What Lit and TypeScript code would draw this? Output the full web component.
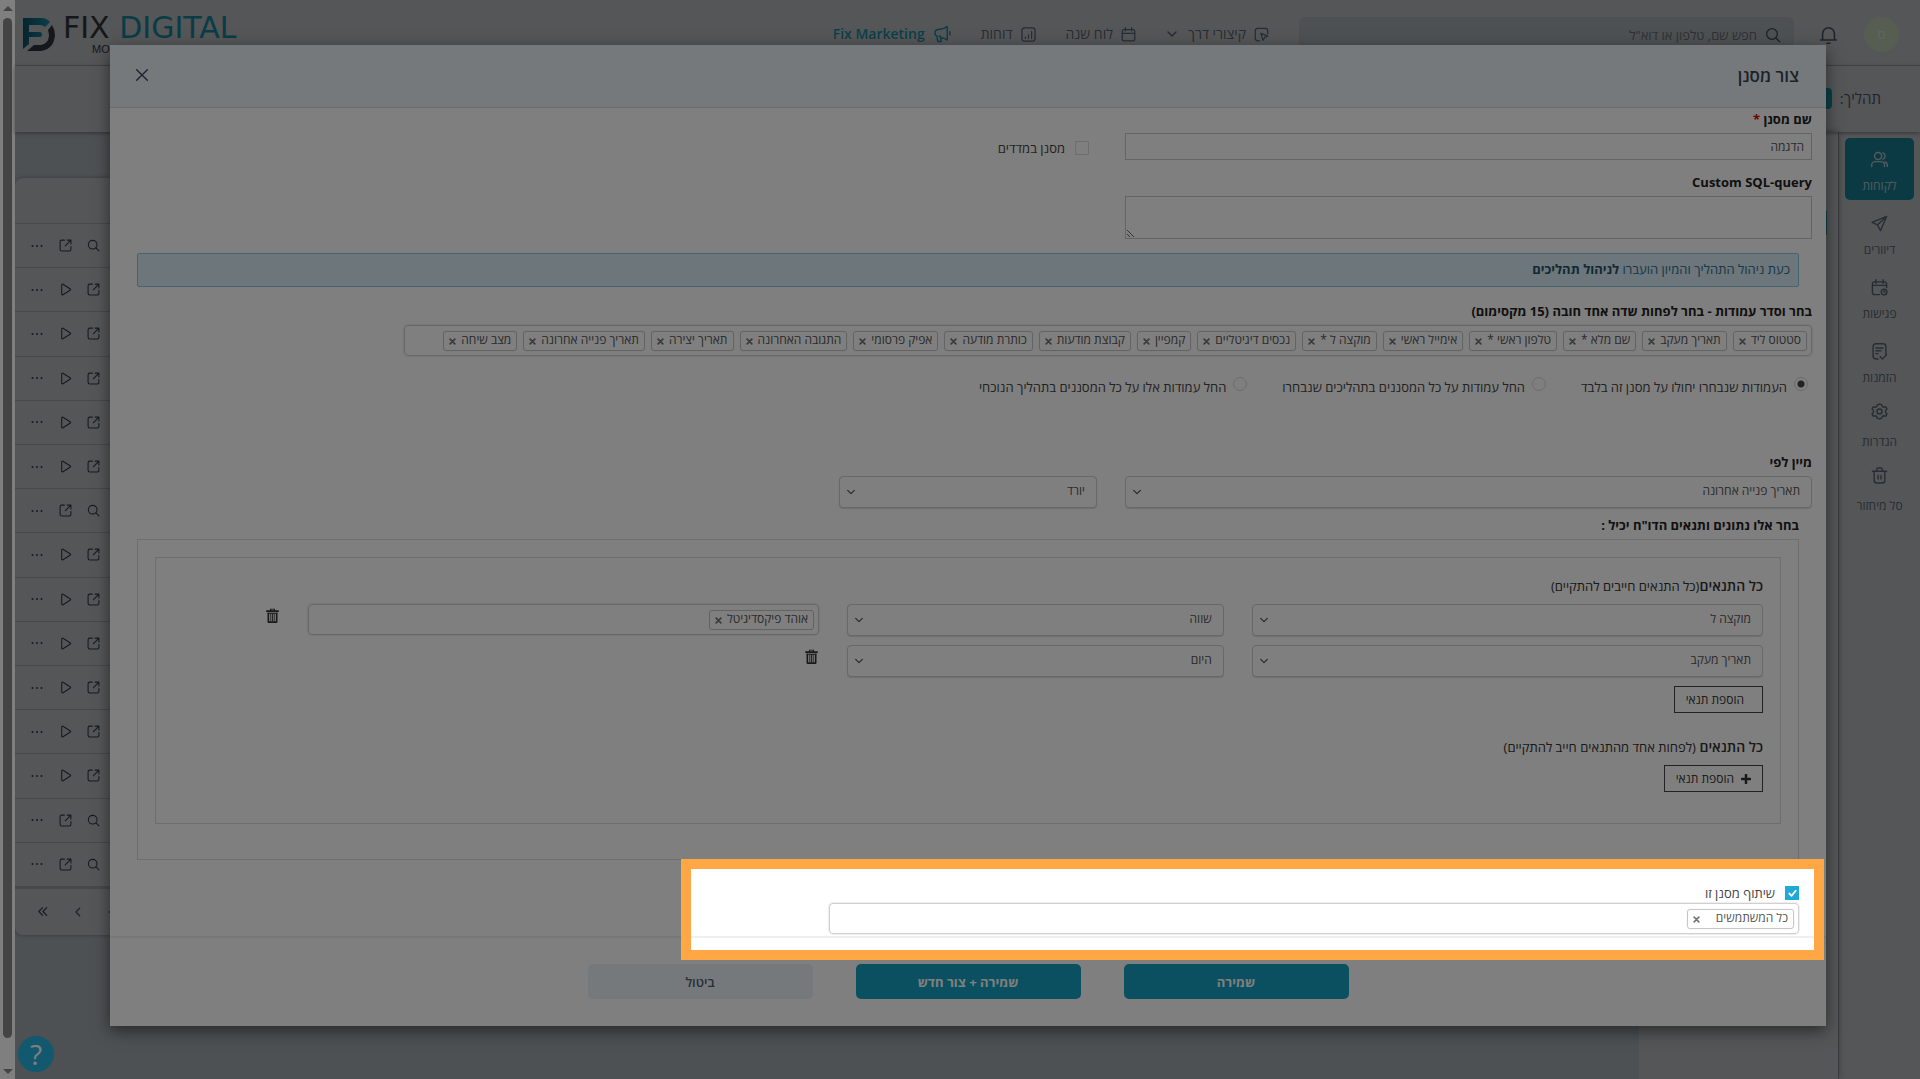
import { LitElement, html, svg, css, nothing } from "lit";
import { customElement, property } from "lit/decorators.js";
import { classMap } from "lit/directives/class-map.js";

const ICONS: Record<string, unknown> = {
  close: svg`<path d="M4 4l16 16M20 4L4 20"/>`,
  bell: svg`<path d="M2 19h20M4.500 19v-8a7.500 7.500 0 0 1 15 0v8M10 23h4"/>`,
  search: svg`<circle cx="10.500" cy="10.500" r="8"/><path d="M16.500 16.500L22 22"/>`,
  shortcut: svg`<path d="M9 22H6a4 4 0 0 1-4-4V6a4 4 0 0 1 4-4h12a4 4 0 0 1 4 4v5"/><path d="M11 10l11 4.500-5 2-2.500 5z"/>`,
  chevron: svg`<path d="M4 8l8 8 8-8"/>`,
  calendar: svg`<rect x="2" y="4" width="20" height="18" rx="3"/><path d="M2 10h20M7 1v5M17 1v5"/>`,
  report: svg`<rect x="1.500" y="1.500" width="21" height="21" rx="4"/><path d="M7 16v2M12 12v6M17 7v11"/>`,
  megaphone: svg`<path d="M19 2C15 5 11 6 6.500 6A4.500 4.500 0 0 0 5 14.500L6.500 22H11l-1-5c3 0 6 1 9 3zM22.500 9v4M8 15h2"/>`,
  users: svg`<circle cx="10" cy="7" r="5"/><path d="M1 22v-2a5 5 0 0 1 5-5h8a5 5 0 0 1 5 5v2M17 2.500a5 5 0 0 1 0 9M19.500 15.500a5 5 0 0 1 3.500 5V22"/>`,
  send: svg`<path d="M22 2L1.500 10.500l7.500 3.500L13.500 22zM22 2L9 14"/>`,
  meeting: svg`<path d="M12 22H5a3 3 0 0 1-3-3V7a3 3 0 0 1 3-3h14a3 3 0 0 1 3 3v5M2 9h20M7 1v5M17 1v5"/><circle cx="18.500" cy="18.500" r="4"/><path d="M18.500 16.500v2h1.500"/>`,
  orders: svg`<path d="M10 22.500H7a4 4 0 0 1-4-4V5a4 4 0 0 1 4-4h10a4 4 0 0 1 4 4v11M7 7h10M7 11h7M7 15h3M13 19.500l3 3 6-6"/>`,
  gear: svg`<circle cx="12" cy="12" r="3.500"/><path d="M12 1.500l3 1 1 2.500 2 1 3-.5 1.500 3-2 2v3l2 2-1.500 3-3-.5-2 1-1 2.500-3 1-3-1L8 19l-2-1-3 .5-1.500-3 2-2v-3l-2-2L3 5.500 6 6l2-1 1-2.500z"/>`,
  bin: svg`<path d="M2 6h20M8 6V3.500A2 2 0 0 1 10 1.500h4a2 2 0 0 1 2 2V6M4.500 6v13a3.500 3.500 0 0 0 3.500 3.500h8a3.500 3.500 0 0 0 3.500-3.500V6M10 12v5M14 12v5"/>`,
  open: svg`<path d="M10 2H5a3 3 0 0 0-3 3v14a3 3 0 0 0 3 3h14a3 3 0 0 0 3-3v-5M15 2h7v7M22 2L11.500 12.500"/>`,
  play: svg`<path d="M5 3.500v17a1.500 1.500 0 0 0 2.300 1.200L21 13a1.200 1.200 0 0 0 0-2L7.300 2.300A1.500 1.500 0 0 0 5 3.500z"/>`,
  dots: svg`<g fill="currentColor" stroke="none"><circle cx="3" cy="12" r="2"/><circle cx="12" cy="12" r="2"/><circle cx="21" cy="12" r="2"/></g>`,
  first: svg`<path d="M12 4l-8 8 8 8M21 4l-8 8 8 8"/>`,
  prev: svg`<path d="M16 3l-9 9 9 9"/>`,
  check: svg`<path d="M5 12l5 5 9-11"/>`,
  plus: svg`<path d="M12 2v20M2 12h20"/>`,
  cross: svg`<path d="M4 4l16 16M20 4L4 20"/>`,
  trash: svg`<g fill="currentColor" stroke="none"><path d="M2 3.500h20v3H2zM8 3.500V1h8v2.500h-2V2.500h-4v1zM4 7.500h2.600V21h10.800V7.500H20V22a2 2 0 0 1-2 2H6a2 2 0 0 1-2-2z"/><path d="M4 7.500h16v1.800H4zM8.600 9H10v12H8.600zM11.300 9h1.400v12h-1.400zM14 9h1.400v12H14z"/></g>`,
};

@customElement("ui-icon")
class UiIcon extends LitElement {
  @property() name = "";
  @property({ type: Number }) size = 16;
  @property({ type: Number }) stroke = 2;

  static styles = css`
    :host { display: inline-flex; flex: none; }
    svg { display: block; fill: none; stroke: currentColor; stroke-linecap: round; stroke-linejoin: round; }
  `;

  render() {
    return html`<svg width=${this.size} height=${this.size} viewBox="0 0 24 24" stroke-width=${this.stroke} aria-hidden="true">${ICONS[this.name]}</svg>`;
  }
}

const NAV = [
  { icon: "shortcut", text: "קיצורי דרך", menu: true },
  { icon: "calendar", text: "לוח שנה" },
  { icon: "report", text: "דוחות" },
  { icon: "megaphone", text: "Fix Marketing", brand: true },
];

const SIDE = [
  { icon: "users", text: "לקוחות", active: true },
  { icon: "send", text: "דיוורים" },
  { icon: "meeting", text: "פגישות" },
  { icon: "orders", text: "הזמנות" },
  { icon: "gear", text: "הגדרות", tight: true },
  { icon: "bin", text: "סל מיחזור", tight: true },
];

/* s = search + open actions, p = open + play actions */
const ROWS = "spppppsppppppss";

const COLUMNS = [
  "סטטוס ליד", "תאריך מעקב", "שם מלא *", "טלפון ראשי *", "אימייל ראשי", "מוקצה ל *",
  "נכסים דיגיטליים", "קמפיין", "קבוצת מודעות", "כותרת מודעה", "אפיק פרסומי",
  "התגובה האחרונה", "תאריך יצירה", "תאריך פנייה אחרונה", "מצב שיחה",
];

const SCOPES = [
  "העמודות שנבחרו יחולו על מסנן זה בלבד",
  "החל עמודות על כל המסננים בתהליכים שנבחרו",
  "החל עמודות אלו על כל המסננים בתהליך הנוכחי",
];

@customElement("app-root")
class AppRoot extends LitElement {
  static styles = css`
    :host {
      display: block;
      direction: rtl;
      position: relative;
      height: 100vh;
      overflow: hidden;
      font: 13px/20px "Open Sans", "Noto Sans", sans-serif;
      color: #444;
    }
    *, *::before { box-sizing: border-box; }
    button, input, select, textarea { font: inherit; color: inherit; margin: 0; }
    button { border: 0; background: none; padding: 0; cursor: pointer; }
    a { color: inherit; text-decoration: none; }
    ul { list-style: none; margin: 0; padding: 0; }

    .page { display: flex; height: 100%; }
    .site { flex: 1; min-width: 0; display: flex; flex-direction: column; background: #aaacae; }
    .scroll { width: 15px; background: #fff; display: flex; flex-direction: column; align-items: center; padding: 6px 3px 5px; gap: 7px; }
    .scroll .up { border: 5px solid transparent; border-top: 0; border-bottom-color: #888; }
    .scroll .down { border: 5px solid transparent; border-bottom: 0; border-top-color: #888; }
    .scroll .thumb { flex: 1; width: 9px; border-radius: 5px; background: #888; margin-bottom: 24px; }

    .top { display: flex; align-items: flex-start; height: 66px; border-bottom: 1px solid #8c8f91; padding: 17px 21px 0 8px; color: #4d5a68; }
    .avatar { width: 35px; height: 35px; border-radius: 50%; background: #acbda3; color: #c3cabf; text-align: center; line-height: 35px; }
    .bell { margin: 8px 26px 0 25px; color: #3c4a5b; }
    .find { width: 495px; height: 35px; border-radius: 6px; background: #9aa2a6; display: flex; align-items: center; gap: 8px; padding: 0 13px; color: #3c4450; }
    .find input { flex: 1; border: 0; background: none; outline: 0; padding: 0; }
    .find input::placeholder { color: #5c6268; opacity: 1; }
    .nav { display: flex; gap: 30px; margin-right: 30px; padding-top: 7px; font-size: 14px; }
    .nav a { display: flex; align-items: center; gap: 8px; }
    .nav .chev { margin-right: 2px; }
    .nav .brand { color: #157f92; font-weight: 600; }
    .logo { margin-right: auto; direction: ltr; display: flex; gap: 8px; }
    .logo svg { display: block; margin-top: 1px; }
    .word { display: flex; flex-direction: column; font: 30px/22px "DejaVu Sans", sans-serif; color: #2d2f35; white-space: nowrap; }
    .word b { font-weight: 400; color: #12788f; }
    .word small { font: 11px/12px "Liberation Sans", sans-serif; padding: 4px 0 0 29px; }

    .sub { height: 66px; position: relative; display: flex; align-items: center; gap: 8px; padding: 0 39px 2px 0; box-shadow: 0 1px 4px rgba(0, 0, 0, .4); font-size: 15px; color: #3f4a56; }
    .pill { width: 120px; height: 21px; border-radius: 4px; background: #157f92; }

    .work { flex: 1; display: flex; min-height: 0; }
    .side { width: 82px; border-left: 1px solid #8a8e96; padding: 6px 6px 0; }
    .side a { display: flex; flex-direction: column; align-items: center; justify-content: flex-end; gap: 8px; height: 62px; margin-bottom: 2px; padding-bottom: 4px; border-radius: 5px; font-size: 12px; color: #4d5a68; line-height: 20px; }
    .side .tight { gap: 12px; }
    .side .active { background: #187488; color: #a9b4b8; }
    .panel { width: 199px; box-shadow: 0 0 6px rgba(0, 0, 0, .4); padding: 79px 11px 0; }
    .panel i { display: block; height: 24px; background: #157f92; }
    .list { flex: 1; background: #9aa2a6; padding-top: 46px; }
    .card { background: #aaacae; border-radius: 8px; box-shadow: 0 0 4px rgba(0, 0, 0, .3); height: 757px; display: flex; flex-direction: column; }
    .chead { height: 46px; border-bottom: 1px solid #8f9294; }
    .rows { flex: 1; display: grid; grid-auto-rows: 1fr; border-bottom: 2px solid #8c9092; }
    .row { display: flex; justify-content: flex-end; align-items: center; gap: 16px; padding-left: 16px; border-bottom: 1px solid #8c9294; color: #2c3540; }
    .row button { display: flex; width: 12px; justify-content: center; }
    .pager { height: 46px; display: flex; justify-content: flex-end; align-items: center; gap: 25px; padding-left: 22px; color: #3c4450; }

    .layer { position: absolute; inset: 0; padding: 45px 94px 0 110px; }
    .modal { background: #fff; box-shadow: 0 5px 15px rgba(0, 0, 0, .5); }
    .mhead { height: 63px; display: flex; align-items: center; justify-content: space-between; padding: 0 27px 0 24px; background: #ebf3f8; border-bottom: 1px solid #d5d9db; }
    .mhead h2 { margin: 0; font-size: 17px; font-weight: 600; color: #3a4553; }
    .mhead button { display: flex; padding-bottom: 2px; color: #3a4060; }
    .mbody { padding: 1px 14px 0; }
    .grid { display: grid; grid-template-columns: repeat(12, minmax(0, 1fr)); column-gap: 28px; }
    .c5 { grid-column: span 5; }
    .c4 { grid-column: span 4; }
    .c3 { grid-column: span 3; }
    .c2 { grid-column: span 2; }
    .label { display: block; font-weight: 700; color: #222; margin-bottom: 4px; }
    .label em { color: #d00; font-style: normal; }
    .text { display: block; width: 100%; height: 27px; border: 1px solid #c8c8c8; background: #fff; padding: 0 7px; font-size: 12px; color: #555; }
    .area { height: 43px; }
    .gap { margin-top: 12px; }
    .tick { display: flex; align-items: center; gap: 10px; }
    .tick input { appearance: none; flex: none; width: 14px; height: 14px; border: 1px solid #dcdcdc; }
    .indicators { padding: 29px 8px 0; }
    .note { margin: 14px 13px; height: 34px; padding: 5px 8px; border: 1px solid #8cc6e0; border-radius: 2px; background: #d9edf7; color: #31708f; }
    .note b { color: #245269; }
    .tags { display: flex; align-items: center; gap: 6px; height: 31px; padding: 0 4px; border: 1px solid #d0d0d0; border-radius: 4px; box-shadow: 0 0 1px 1px #eee; }
    .tags ul { display: flex; gap: 6px; flex: none; }
    .tags li { display: flex; align-items: center; gap: 5px; height: 20px; padding: 0 5px 2px; border: 1px solid #c8c8c8; border-radius: 3px; box-shadow: 0 0 1px #ccc; font-size: 12px; color: #555; line-height: 16px; white-space: nowrap; }
    .tags li button { display: flex; color: #777; padding-top: 3px; }
    .tags input { flex: 1; min-width: 0; width: 40px; border: 0; outline: 0; background: none; padding: 0; }
    .cols { width: fit-content; }
    .cols input { width: 28px; }
    .scopes { display: flex; gap: 35px; border: 0; margin: 20px 0 54px; padding: 0 4px; }
    .scopes label { display: flex; gap: 7px; align-items: flex-start; line-height: 22px; }
    .scopes input { appearance: none; flex: none; width: 14px; height: 14px; margin-top: 1px; border: 1px solid #d8d8d8; border-radius: 50%; }
    .scopes input:checked { background: radial-gradient(circle, #444 0 3px, transparent 4px); }
    .drop { display: grid; align-items: center; height: 32px; }
    .drop > * { grid-area: 1 / 1; }
    .drop select { appearance: none; width: 100%; height: 32px; padding: 0 11px 2px; border: 1px solid #d0d0d0; border-radius: 4px; background: #fff; box-shadow: 0 1px 1px #e0e0e0; font-size: 12px; color: #555; }
    .drop ui-icon { justify-self: end; margin-left: 7px; color: #555; pointer-events: none; }
    .choose { padding: 7px 13px 0; }
    .outer { margin: 0 13px; padding: 17px 17px 35px; border: 1px solid #ddd; }
    .inner { padding: 18px 17px 31px; border: 1px solid #ddd; }
    .inner h3 { margin: 0 0 8px; font-size: 14px; line-height: 20px; font-weight: 600; color: #333; }
    .inner h3 span { font-size: 13px; font-weight: 400; }
    .inner h3.second { margin-top: 24px; }
    .cond { margin-bottom: 9px; }
    .del { display: flex; align-self: start; width: 12px; padding-top: 4px; color: #333; }
    .add { display: flex; align-items: center; gap: 7px; height: 27px; padding: 0 11px; border: 1px solid #444; font-size: 12px; color: #333; }
    .add.plain { padding-right: 18px; }
    .share { padding: 23px 13px 2px; }
    .share .tick input { background: #20a8d8; border-color: #20a8d8; }
    .share .tick { width: fit-content; }
    .tick .box { display: grid; }
    .tick .box > * { grid-area: 1 / 1; place-self: center; }
    .tick .box ui-icon { color: #fff; pointer-events: none; }
    .share .tags { width: 970px; max-width: 100%; }
    .share .tags li { gap: 16px; }
    .foot { display: flex; justify-content: center; gap: 43px; padding: 26px 0 27px; border-top: 2px solid #f0f0f0; }
    .foot button { width: 225px; height: 35px; border-radius: 5px; background: #16a0c0; color: #fff; font-weight: 700; }
    .foot .quiet { background: #ebf3f8; color: #55606e; font-weight: 600; }

    .help { position: absolute; left: 18px; bottom: 7px; width: 36px; height: 36px; border-radius: 50%; background: #24b0de; color: #fff; font-size: 28px; line-height: 36px; text-align: center; }
    .spot { position: absolute; left: 681px; right: 96px; top: 859px; height: 101px; border: 10px solid #ffa645; box-shadow: 0 0 0 3000px rgba(0, 0, 0, .5); pointer-events: none; }
  `;

  private tag(text: string) {
    return html`<li>${text}<button aria-label=${"הסר " + text}><ui-icon name="cross" size="7" stroke="6"></ui-icon></button></li>`;
  }

  private drop(name: string, value: string) {
    return html`<div class="drop">
      <select aria-label=${name}><option>${value}</option></select>
      <ui-icon name="chevron" size="10" stroke="3"></ui-icon>
    </div>`;
  }

  private del() {
    return html`<button class="del" aria-label="מחיקה"><ui-icon name="trash" size="15"></ui-icon></button>`;
  }

  private row(kind: string) {
    return html`<div class="row">
      <button aria-label=${kind === "s" ? "חיפוש" : "פתיחה"}><ui-icon name=${kind === "s" ? "search" : "open"} size="13"></ui-icon></button>
      <button aria-label=${kind === "s" ? "פתיחה" : "הפעלה"}><ui-icon name=${kind === "s" ? "open" : "play"} size="13"></ui-icon></button>
      <button aria-label="עוד"><ui-icon name="dots" size="12"></ui-icon></button>
    </div>`;
  }

  private renderSite() {
    return html`<div class="page">
      <div class="site">
        <header class="top">
          <div class="avatar">ס</div>
          <button class="bell" aria-label="התראות"><ui-icon name="bell" size="19"></ui-icon></button>
          <label class="find"><ui-icon name="search" size="16"></ui-icon>
            <input type="search" placeholder='חפש שם, טלפון או דוא"ל' /></label>
          <nav class="nav">
            ${NAV.map((n) => html`<a href="#" class=${classMap({ brand: !!n.brand })}>
              <ui-icon name=${n.icon} size=${n.brand ? 18 : 15}></ui-icon>${n.text}
              ${n.menu ? html`<ui-icon class="chev" name="chevron" size="12" stroke="3"></ui-icon>` : nothing}</a>`)}
          </nav>
          <div class="logo">
            <svg width="32" height="33" viewBox="0 0 32 33">
              <defs><linearGradient id="g"><stop offset="0" stop-color="#0f4a5e"/><stop offset="1" stop-color="#128096"/></linearGradient></defs>
              <path fill="url(#g)" d="M0 0h18q6 0 9 4l-5 5q-2-2-5-2H6v7h11q2 0 2 2.500T17 19H6v7l-6 5z"/>
              <path fill="#2d2f35" d="M29 7q3 5 3 10-1 14-14 16H4l7-6h7q7-1 8-9 0-3-1-6z"/>
            </svg>
            <div class="word"><span>FIX <b>DIGITAL</b></span><small>MORE THAN CRM</small></div>
          </div>
        </header>
        <div class="sub"><span>תהליך:</span><span class="pill"></span></div>
        <div class="work">
          <nav class="side">
            ${SIDE.map((s) => html`<a href="#" class=${classMap({ active: !!s.active, tight: !!s.tight })}>
              <ui-icon name=${s.icon} size="17" stroke="2"></ui-icon>${s.text}</a>`)}
          </nav>
          <div class="panel"><i></i></div>
          <main class="list">
            <div class="card">
              <div class="chead"></div>
              <div class="rows">${[...ROWS].map((k) => this.row(k))}</div>
              <div class="pager">
                <ui-icon name="dots" size="10"></ui-icon>
                <button aria-label="הקודם"><ui-icon name="prev" size="10" stroke="3"></ui-icon></button>
                <button aria-label="ראשון"><ui-icon name="first" size="11" stroke="3"></ui-icon></button>
              </div>
            </div>
          </main>
        </div>
      </div>
      <div class="scroll" aria-hidden="true"><span class="up"></span><span class="thumb"></span><span class="down"></span></div>
    </div>`;
  }

  private renderModal() {
    return html`<div class="layer"><section class="modal" role="dialog" aria-labelledby="title">
      <div class="mhead"><h2 id="title">צור מסנן</h2>
        <button aria-label="סגירה"><ui-icon name="close" size="16" stroke="2"></ui-icon></button></div>
      <div class="mbody">
        <div class="grid">
          <div class="c5">
            <label class="label" for="name">שם מסנן <em>*</em></label>
            <input class="text" id="name" .value=${"הדגמה"} />
            <label class="label gap" for="sql">Custom SQL-query</label>
            <textarea class="text area" id="sql"></textarea>
          </div>
          <div class="c3 indicators"><label class="tick"><input type="checkbox" />מסנן במדדים</label></div>
        </div>
        <div class="note">כעת ניהול התהליך והמיון הועברו <b>לניהול תהליכים</b></div>
        <label class="label" for="cols">בחר וסדר עמודות - בחר לפחות שדה אחד חובה (15 מקסימום)</label>
        <div class="tags cols"><ul>${COLUMNS.map((c) => this.tag(c))}</ul><input id="cols" /></div>
        <fieldset class="scopes">
          ${SCOPES.map((s, i) => html`<label><input type="radio" name="scope" ?checked=${i === 0} />${s}</label>`)}
        </fieldset>
        <span class="label">מיין לפי</span>
        <div class="grid">
          <div class="c5">${this.drop("מיין לפי", "תאריך פנייה אחרונה")}</div>
          <div class="c2">${this.drop("סדר", "יורד")}</div>
        </div>
        <span class="label choose">בחר אלו נתונים ותנאים הדו"ח יכיל :</span>
        <div class="outer"><div class="inner">
          <h3>כל התנאים<span>(כל התנאים חייבים להתקיים)</span></h3>
          <div class="grid cond">
            <div class="c4">${this.drop("שדה", "מוקצה ל")}</div>
            <div class="c3">${this.drop("תנאי", "שווה")}</div>
            <div class="c4 tags"><ul>${this.tag("אוהד פיקסדיגיטל")}</ul><input aria-label="ערך" /></div>
            ${this.del()}
          </div>
          <div class="grid cond">
            <div class="c4">${this.drop("שדה", "תאריך מעקב")}</div>
            <div class="c3">${this.drop("תנאי", "היום")}</div>
            ${this.del()}
          </div>
          <button class="add plain">הוספת תנאי</button>
          <h3 class="second">כל התנאים <span>(לפחות אחד מהתנאים חייב להתקיים)</span></h3>
          <button class="add"><ui-icon name="plus" size="10" stroke="6"></ui-icon>הוספת תנאי</button>
        </div></div>
        <div class="share">
          <label class="tick"><span class="box"><input type="checkbox" checked /><ui-icon name="check" size="11" stroke="4"></ui-icon></span>שיתוף מסנן זו</label>
          <div class="tags"><ul>${this.tag("כל המשתמשים")}</ul><input aria-label="משתמשים" /></div>
        </div>
      </div>
      <div class="foot"><button>שמירה</button><button>שמירה + צור חדש</button><button class="quiet">ביטול</button></div>
    </section></div>`;
  }

  render() {
    return html`${this.renderSite()}${this.renderModal()}
      <button class="help" aria-label="עזרה">?</button>
      <div class="spot"></div>`;
  }
}
